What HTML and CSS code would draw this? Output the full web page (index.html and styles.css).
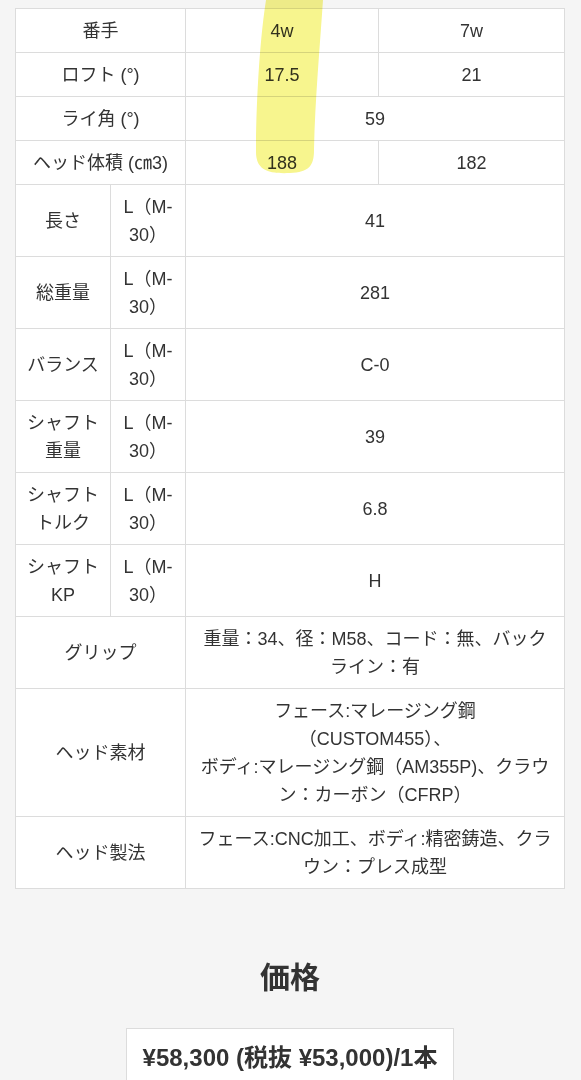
FILE: index.html
```html
<!DOCTYPE html>
<html lang="ja">
<head>
<meta charset="utf-8">
<title>スペック</title>
<link rel="stylesheet" href="styles.css">
</head>
<body>
<div class="page">
  <table class="spec">
    <colgroup><col class="c1"><col class="c2"><col class="c3"><col class="c4"></colgroup>
    <tbody>
      <tr><th colspan="2">番手</th><td>4w</td><td>7w</td></tr>
      <tr><th colspan="2">ロフト (°)</th><td>17.5</td><td>21</td></tr>
      <tr><th colspan="2">ライ角 (°)</th><td colspan="2">59</td></tr>
      <tr><th colspan="2">ヘッド体積 (㎝3)</th><td>188</td><td>182</td></tr>
      <tr><th>長さ</th><td class="sub">L（M-<wbr>30）</td><td colspan="2">41</td></tr>
      <tr><th>総重量</th><td class="sub">L（M-<wbr>30）</td><td colspan="2">281</td></tr>
      <tr><th>バランス</th><td class="sub">L（M-<wbr>30）</td><td colspan="2">C-0</td></tr>
      <tr><th>シャフト重量</th><td class="sub">L（M-<wbr>30）</td><td colspan="2">39</td></tr>
      <tr><th>シャフトトルク</th><td class="sub">L（M-<wbr>30）</td><td colspan="2">6.8</td></tr>
      <tr><th>シャフトKP</th><td class="sub">L（M-<wbr>30）</td><td colspan="2">H</td></tr>
      <tr><th colspan="2">グリップ</th><td colspan="2">重量：34、径：M58、コード：無、バックライン：有</td></tr>
      <tr><th colspan="2">ヘッド素材</th><td colspan="2">フェース:マレージング鋼<br>（CUSTOM455）、<br>ボディ:マレージング鋼（AM355P)、クラウン：カーボン（CFRP）</td></tr>
      <tr><th colspan="2">ヘッド製法</th><td colspan="2">フェース:CNC加工、ボディ:精密鋳造、クラウン：プレス成型</td></tr>
    </tbody>
  </table>

  <section class="price">
    <h2 class="price-title">価格</h2>
    <div class="price-box">¥58,300 (税抜 ¥53,000)/1本</div>
  </section>

  <svg class="marker" width="581" height="200" viewBox="0 0 581 200" aria-hidden="true">
    <path d="M266,0 L323,0 C320,45 315,100 314,150 C314,166 309,172 290,173 C268,174 256,170 256,152 C256,110 259,45 266,0 Z" fill="#f7f58e"/>
  </svg>
</div>
</body>
</html>
```

FILE: styles.css
```css
html, body {
  margin: 0;
  padding: 0;
  background: #f5f5f5;
}

body {
  font-family: "Liberation Sans", "Noto Sans CJK JP", sans-serif;
  color: #333;
  font-size: 18px;
}

.page {
  position: relative;
  padding: 8px 16px 0 15px;
}

.spec {
  width: 549px;
  table-layout: fixed;
  border-collapse: collapse;
  background: #fff;
}

.spec .c1 { width: 95px; }
.spec .c2 { width: 75px; }
.spec .c3 { width: 193px; }
.spec .c4 { width: 186px; }

.spec th,
.spec td {
  border: 1px solid #dcdcdc;
  padding: 7.5px 10px;
  line-height: 28px;
  font-weight: normal;
  text-align: center;
  vertical-align: middle;
}

.price {
  display: flex;
  flex-direction: column;
  align-items: center;
}

.price-title {
  margin: 68px 0 29px;
  font-size: 30px;
  line-height: 42px;
  font-weight: bold;
  color: #333;
}

.price-box {
  background: #fff;
  border: 1px solid #dcdcdc;
  padding: 12px 16px;
  font-size: 24px;
  line-height: 33px;
  font-weight: bold;
  color: #333;
}

.marker {
  position: absolute;
  left: 0;
  top: 0;
  pointer-events: none;
  mix-blend-mode: multiply;
}
```
